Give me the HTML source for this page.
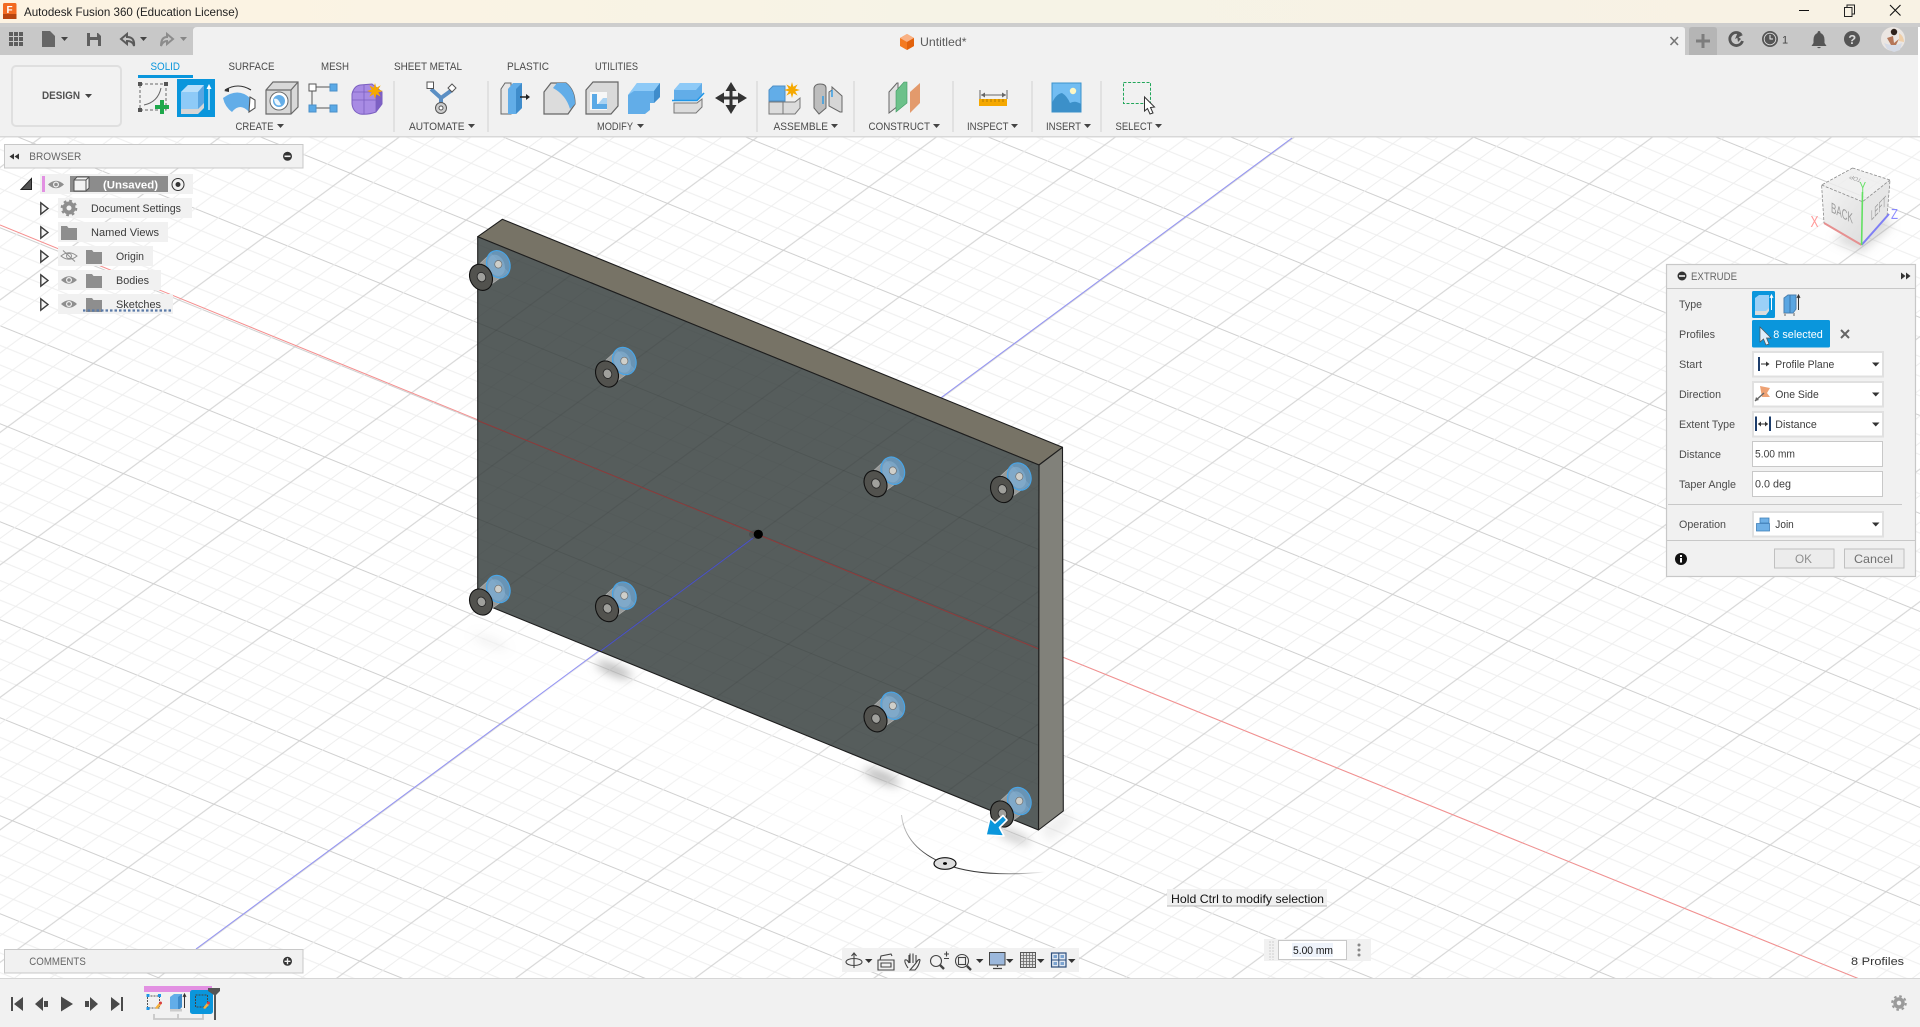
<!DOCTYPE html>
<html><head><meta charset="utf-8"><title>Autodesk Fusion 360</title>
<style>
html,body{margin:0;padding:0;background:#fff;width:1920px;height:1027px;overflow:hidden}
svg{display:block;position:absolute;left:0;top:0}
text{font-family:"Liberation Sans",sans-serif;font-size:11px;fill:#4a4a4a}
.l{font-size:11px;fill:#4c4c4c}
.v{font-size:11px;fill:#3c3c3c}
</style></head><body>
<svg width="1920" height="1027" viewBox="0 0 1920 1027" xmlns="http://www.w3.org/2000/svg">
<defs>
<pattern id="gr" patternUnits="userSpaceOnUse" width="400" height="90.86" patternTransform="translate(758,534) rotate(22) translate(0,-45.43)">
<path d="M0 9.09H400M0 27.26H400M0 63.6H400M0 81.77H400" stroke="#eeeeee" stroke-width="1" fill="none"/>
<path d="M0 45.43H400" stroke="#d0d0d0" stroke-width="1" fill="none"/>
</pattern>
<pattern id="gb" patternUnits="userSpaceOnUse" width="400" height="106.5" patternTransform="translate(758,534) rotate(-36.5) translate(0,-53.25)">
<path d="M0 10.65H400M0 31.95H400M0 74.55H400M0 95.85H400" stroke="#eeeeee" stroke-width="1" fill="none"/>
<path d="M0 53.25H400" stroke="#d0d0d0" stroke-width="1" fill="none"/>
</pattern>
<pattern id="dr" patternUnits="userSpaceOnUse" width="400" height="90.86" patternTransform="translate(758,534) rotate(22) translate(0,-45.43)">
<path d="M0 9.09H400M0 27.26H400M0 63.6H400M0 81.77H400" stroke="#000" stroke-opacity=".03" fill="none"/>
<path d="M0 45.43H400" stroke="#000" stroke-opacity=".09" fill="none"/>
</pattern>
<pattern id="db" patternUnits="userSpaceOnUse" width="400" height="106.5" patternTransform="translate(758,534) rotate(-36.5) translate(0,-53.25)">
<path d="M0 10.65H400M0 31.95H400M0 74.55H400M0 95.85H400" stroke="#000" stroke-opacity=".03" fill="none"/>
<path d="M0 53.25H400" stroke="#000" stroke-opacity=".09" fill="none"/>
</pattern>
<linearGradient id="tb" x1="0" x2="1" y1="0" y2="0"><stop offset="0" stop-color="#fdf3e2"/><stop offset=".5" stop-color="#f6f3e6"/><stop offset="1" stop-color="#f8f2e4"/></linearGradient>
<linearGradient id="cubeL" x1="0" x2="1" y1="0" y2="1"><stop offset="0" stop-color="#f4f4f4"/><stop offset="1" stop-color="#dedede"/></linearGradient>
<linearGradient id="arc" gradientUnits="userSpaceOnUse" x1="900" y1="0" x2="1045" y2="0"><stop offset="0" stop-color="#222" stop-opacity=".2"/><stop offset=".2" stop-color="#222" stop-opacity=".9"/><stop offset=".6" stop-color="#222" stop-opacity=".9"/><stop offset="1" stop-color="#222" stop-opacity="0"/></linearGradient>
<filter id="b6" x="-50%" y="-50%" width="200%" height="200%"><feGaussianBlur stdDeviation="5"/></filter>
<filter id="b10" x="-30%" y="-30%" width="160%" height="160%"><feGaussianBlur stdDeviation="12"/></filter>
<g id="bolt">
<path d="M-2.500 -12.500 L10 -24 L27 -5 L11 6.500 Z" fill="#c2c2c0" fill-opacity=".62" stroke="#b5b5b5" stroke-width=".6"/>
<ellipse cx="17.300" cy="-13" rx="11.500" ry="14" transform="rotate(-22 17.300 -13)" fill="#6c9dc4" fill-opacity=".85" stroke="#46a6ea" stroke-width="1.100"/>
<ellipse cx="15.500" cy="-12" rx="8" ry="11" transform="rotate(-22 15.500 -12)" fill="#8ab3d2" fill-opacity=".55"/>
<ellipse cx="17.300" cy="-13" rx="3.600" ry="3.800" fill="#cfcfca" stroke="#6e6e6e" stroke-width=".7"/>
<ellipse cx="0" cy="0" rx="11" ry="13.500" transform="rotate(-25)" fill="#52524e" stroke="#111" stroke-width="1.100"/>
<ellipse cx="0.500" cy="0" rx="4.200" ry="4.800" transform="rotate(-25)" fill="#a0a09c" stroke="#2a2a2a" stroke-width=".9"/>
</g>
<path id="car" d="M0 0h7l-3.500 4z" fill="#444"/>
<g id="eye"><path d="M-8 0Q0 -7.500 8 0Q0 7.500 -8 0Z" fill="#8f8f8f"/><circle r="3" fill="#f1f1f1"/><circle r="1.800" fill="#8f8f8f"/></g>
<path id="fold" d="M0 2h6l1.500 2H16v12H0z" fill="#8e8e8e"/>
<path id="tri" d="M0.800 0.800L8 6.500L0.800 12.200Z" fill="#f5f5f5" stroke="#3c3c3c" stroke-width="1.400"/>
<path id="cat" d="M0 0h7.500l-3.750 4z" fill="#333"/>
<polygon id="star" points="8,0 3.230,1.340 5.660,5.660 1.340,3.230 0,8 -1.340,3.230 -5.660,5.660 -3.230,1.340 -8,0 -3.230,-1.340 -5.660,-5.660 -1.340,-3.230 0,-8 1.340,-3.230 5.660,-5.660 3.230,-1.340" fill="#f5a800"/>
</defs>

<!-- viewport -->
<rect x="0" y="137" width="1920" height="842" fill="#fff"/>
<rect x="0" y="137" width="1920" height="842" fill="url(#gr)"/>
<rect x="0" y="137" width="1920" height="842" fill="url(#gb)"/>

<!-- ground haze + shadows -->
<path d="M470 620L1040 850L1000 915L450 670Z" fill="#fff" fill-opacity=".6" filter="url(#b10)"/>
<path d="M0 225L758 534L1920 1003.500" stroke="#f58f8f" stroke-width="1" fill="none"/>
<path d="M1292 138L196 949" stroke="#9292f5" stroke-width="1" fill="none"/>
<g filter="url(#b6)" fill="#9a9a9a">
<ellipse cx="614" cy="670" rx="19" ry="5" transform="rotate(22 614 670)" fill-opacity=".75"/>
<ellipse cx="882" cy="777" rx="19" ry="5" transform="rotate(22 882 777)" fill-opacity=".75"/>
<ellipse cx="1013" cy="836" rx="19" ry="5" transform="rotate(22 1013 836)" fill-opacity=".5"/>
<ellipse cx="490" cy="642" rx="19" ry="5" transform="rotate(22 490 642)" fill-opacity=".12"/>
</g>
<path d="M1039 830L1063 811L1075 820L1050 842Z" fill="#aaa" fill-opacity=".2" filter="url(#b6)"/>

<!-- plate -->
<polygon points="477.700,236.700 502.300,219.300 1062.500,447.300 1039,465" fill="#777366" stroke="#1e1e1e" stroke-width="1.100" stroke-linejoin="round"/>
<polygon points="1039,465 1062.500,447.300 1063.300,811 1038.500,830" fill="#81817a" stroke="#1e1e1e" stroke-width="1.100" stroke-linejoin="round"/>
<polygon points="477.700,236.700 1039,465 1038.500,830 477.700,601.500" fill="#565d5c"/>
<polygon points="477.700,236.700 1039,465 1038.500,830 477.700,601.500" fill="url(#dr)"/>
<polygon points="477.700,236.700 1039,465 1038.500,830 477.700,601.500" fill="url(#db)"/>
<path d="M477.700 420.500L1038.800 649" stroke="#8f3a3a" stroke-width="1" fill="none"/>
<path d="M758 534.300L599.700 651.700" stroke="#4a52c8" stroke-width="1" fill="none"/>
<polygon points="477.700,236.700 1039,465 1038.500,830 477.700,601.500" fill="none" stroke="#1e1e1e" stroke-width="1.100" stroke-linejoin="round"/>
<ellipse cx="756" cy="534.300" rx="7" ry="4.500" fill="#444" fill-opacity=".6"/>
<circle cx="758.300" cy="534.300" r="4.600" fill="#000"/>

<use href="#bolt" x="481" y="277.300"/>
<use href="#bolt" x="607" y="374"/>
<use href="#bolt" x="875.500" y="483.700"/>
<use href="#bolt" x="1002" y="489.500"/>
<use href="#bolt" x="481" y="602"/>
<use href="#bolt" x="607" y="608.600"/>
<use href="#bolt" x="875.500" y="718.800"/>
<use href="#bolt" x="1002" y="814"/>

<!-- manipulator -->
<polygon points="986,835 990,818 995,823 1003,815.500 1007,820 999.500,827.500 1004,836" fill="#0a96dc" stroke="#fff" stroke-width="1.600" stroke-linejoin="round"/>
<path d="M901.500 815Q905 848 945 864Q980 878 1045 872" fill="none" stroke="url(#arc)" stroke-width="1"/>
<ellipse cx="945" cy="863.500" rx="11" ry="5.800" fill="#dedede" stroke="#111" stroke-width="1.200"/>
<ellipse cx="945" cy="863.500" rx="2" ry="1.400" fill="#000"/>

<!-- tooltip -->
<rect x="1167" y="889" width="160" height="17" fill="#f0f0f0"/>
<path d="M1167 906H1327" stroke="#b5b5b5"/>
<text x="1171" y="903" style="font-size:12px;fill:#111" textLength="153" lengthAdjust="spacingAndGlyphs">Hold Ctrl to modify selection</text>

<!-- view cube -->
<path d="M1833 240L1861 253L1892 226L1880 212Z" fill="#999" fill-opacity=".35" filter="url(#b6)"/>
<polygon points="1852.600,168 1821.600,185 1862.500,201.700 1890,180" fill="#ececec" fill-opacity=".8"/>
<polygon points="1821.600,185 1862.500,201.700 1861.600,245 1824,223" fill="url(#cubeL)"/>
<polygon points="1862.500,201.700 1890,180 1887,217 1861.600,245" fill="#e6e6e6"/>
<path d="M1852.600 168L1821.600 185L1824 223M1852.600 168L1890 180L1887 217M1821.600 185L1862.500 201.700L1890 180" fill="none" stroke="#8a8a8a" stroke-width=".8" stroke-dasharray="3 1.500"/>
<path d="M1824 223L1861.600 245" stroke="#e69090" stroke-width="2"/>
<path d="M1861.600 245L1889 214" stroke="#7f7ff5" stroke-width="2"/>
<path d="M1861.600 245L1862.500 192" stroke="#62e062" stroke-width="1.600"/>
<text transform="matrix(.62 .33 0 1.100 1831 212)" style="font-size:13px;fill:#999">BACK</text>
<text transform="matrix(.47 -.5 0 1.100 1871 221)" style="font-size:13px;fill:#999">LEFT</text>
<text transform="matrix(-.55 -.2 .3 -.5 1862 179)" style="font-size:10px;fill:#999">TOP</text>
<text x="1810.500" y="227" style="font-size:16px;fill:#ff9a9a" textLength="8" lengthAdjust="spacingAndGlyphs">X</text>
<text x="1891" y="219" style="font-size:15px;fill:#8a8aff" textLength="7" lengthAdjust="spacingAndGlyphs">Z</text>
<text x="1859.500" y="192" style="font-size:15px;fill:#62e062" textLength="6.500" lengthAdjust="spacingAndGlyphs">Y</text>

<!-- title bar -->
<rect x="0" y="0" width="1920" height="23" fill="url(#tb)"/>
<rect x="0" y="23" width="1920" height="4" fill="#cdcdcd"/>
<rect x="3" y="3" width="13.500" height="16" rx="1.500" fill="#f26a21"/>
<path d="M3 14h13.500v5H3z" fill="#b8440f"/>
<text x="6.500" y="13" style="font-size:10px;font-weight:bold;fill:#fff">F</text>
<text x="24" y="16" style="font-size:12px;fill:#222" textLength="214.500" lengthAdjust="spacingAndGlyphs">Autodesk Fusion 360 (Education License)</text>
<path d="M1799 10.500H1809" stroke="#111" stroke-width="1"/>
<path d="M1844.500 7.500h7.500v9h-7.500zM1847 7.500V5h7.500v9H1852" fill="none" stroke="#222" stroke-width="1"/>
<path d="M1890 5L1900.500 15.500M1900.500 5L1890 15.500" stroke="#111" stroke-width="1.100"/>

<!-- tab row -->
<rect x="0" y="27" width="1918" height="28" fill="#c8c8c8"/>
<path d="M193 55V31Q193 27 197 27H1682Q1685 27 1685 30V55Z" fill="#f1f1f1"/>
<path d="M1689 55V30Q1689 27 1692 27H1714Q1717 27 1717 30V55Z" fill="#b5b5b5"/>
<path d="M1703 34v14M1696 41h14" stroke="#7d7d7d" stroke-width="3"/>
<path d="M1670.500 37L1678 45M1678 37L1670.500 45" stroke="#777" stroke-width="1.600"/>
<!-- left quick icons -->
<path d="M9 32h4v4H9zM14 32h4v4h-4zM19 32h4v4h-4zM9 37h4v4H9zM14 37h4v4h-4zM19 37h4v4h-4zM9 42h4v4H9zM14 42h4v4h-4zM19 42h4v4h-4z" fill="#5d5d5d"/>
<path d="M42 31h8l5 5v11H42z" fill="#666"/><use href="#car" x="61" y="37"/>
<path d="M87 33h11l3 3v10H87z" fill="#5f5f5f"/><rect x="90" y="33" width="7" height="4" fill="#c8c8c8"/><rect x="90" y="40" width="8" height="6" fill="#c8c8c8"/>
<path d="M121 39l6-5v3q8 0 7 9q-1-5-7-5v3z" fill="none" stroke="#5a5a5a" stroke-width="2"/><use href="#car" x="140" y="37"/>
<path d="M173 39l-6-5v3q-6 0-6 9q2-5 6-5v3z" fill="none" stroke="#8c8c8c" stroke-width="2"/><use href="#car" x="180" y="37" opacity=".5"/>
<!-- right icons -->
<path d="M1741 34.500A6.500 6.500 0 1 0 1742.500 41" fill="none" stroke="#555" stroke-width="2.800"/><path d="M1735 39l3-7 5 3z" fill="#555"/><path d="M1737 36l4 3-3 3z" fill="#555"/>
<circle cx="1770" cy="39" r="7.500" fill="#555" stroke="#555"/><circle cx="1770" cy="39" r="5.800" fill="none" stroke="#ddd" stroke-width=".9"/><path d="M1770 35v4h3" stroke="#eee" fill="none"/>
<text x="1782" y="43.500" style="font-size:11px;fill:#444">1</text>
<path d="M1819 31q1.500 0 1.500 2q4 1.500 4 7v3l2 3h-15l2-3v-3q0-5.500 4-7q0-2 1.500-2zM1817 47h4q-2 2.500-4 0z" fill="#555"/>
<circle cx="1852" cy="39" r="8" fill="#555"/><text x="1848.300" y="44" style="font-size:13px;font-weight:bold;fill:#d8d8d8">?</text>
<circle cx="1893" cy="39" r="12" fill="#ebe6e2"/><path d="M1884 43q9 4 18 0l-2 7-6 2-7-3z" fill="#d6dbe6"/><path d="M1899 33a11 11 0 0 1 5 9l-5-1z" fill="#f0cfa8"/><circle cx="1894" cy="32" r="3.200" fill="#2e221c"/><path d="M1887 38l6-2 1 7 5-4-3 6-5 0z" fill="#b5775a"/>

<!-- toolbar -->
<rect x="0" y="55" width="1918" height="81" fill="#f1f1f1"/>
<rect x="193" y="50" width="1492" height="6" fill="#f1f1f1"/>
<rect x="0" y="136" width="1920" height="1.500" fill="#d8d8d8"/>
<rect x="12" y="66" width="109" height="60" rx="4" fill="#f2f2f2" stroke="#dfdfdf" stroke-width="2"/>
<text x="42" y="99" style="font-size:11px;font-weight:bold;fill:#505050" textLength="38" lengthAdjust="spacingAndGlyphs">DESIGN</text><use href="#car" x="85" y="94" />

<text x="150.500" y="70" style="fill:#0a96dc" textLength="29.500" lengthAdjust="spacingAndGlyphs">SOLID</text>
<text x="228.500" y="70" textLength="46" lengthAdjust="spacingAndGlyphs">SURFACE</text>
<text x="321" y="70" textLength="28" lengthAdjust="spacingAndGlyphs">MESH</text>
<text x="394" y="70" textLength="68" lengthAdjust="spacingAndGlyphs">SHEET METAL</text>
<text x="507" y="70" textLength="42" lengthAdjust="spacingAndGlyphs">PLASTIC</text>
<text x="595" y="70" textLength="43" lengthAdjust="spacingAndGlyphs">UTILITIES</text>
<rect x="138" y="75" width="55" height="3" fill="#0a96dc"/>

<g stroke="#dcdcdc" stroke-width="1.500"><path d="M394 81V132M488 81V132M757 81V132M854 81V132M953 81V132M1032 81V132M1101 81V132"/></g>

<!-- toolbar labels -->
<text x="235.500" y="130" textLength="38" lengthAdjust="spacingAndGlyphs">CREATE</text><use href="#car" x="277" y="124"/>
<text x="409" y="130" textLength="55.500" lengthAdjust="spacingAndGlyphs">AUTOMATE</text><use href="#car" x="468" y="124"/>
<text x="597" y="130" textLength="36" lengthAdjust="spacingAndGlyphs">MODIFY</text><use href="#car" x="637" y="124"/>
<text x="773.500" y="130" textLength="54.500" lengthAdjust="spacingAndGlyphs">ASSEMBLE</text><use href="#car" x="831" y="124"/>
<text x="868.500" y="130" textLength="61.500" lengthAdjust="spacingAndGlyphs">CONSTRUCT</text><use href="#car" x="933" y="124"/>
<text x="967" y="130" textLength="41.500" lengthAdjust="spacingAndGlyphs">INSPECT</text><use href="#car" x="1011" y="124"/>
<text x="1046" y="130" textLength="35" lengthAdjust="spacingAndGlyphs">INSERT</text><use href="#car" x="1084" y="124"/>
<text x="1115.500" y="130" textLength="37" lengthAdjust="spacingAndGlyphs">SELECT</text><use href="#car" x="1155" y="124"/>

<!-- create sketch -->
<rect x="140" y="84" width="26" height="26" fill="none" stroke="#666" stroke-dasharray="3 2"/>
<path d="M144 105Q158 102 161 88" fill="none" stroke="#666"/>
<g fill="#555"><rect x="138" y="82" width="4" height="4"/><rect x="164" y="82" width="4" height="4"/><rect x="138" y="108" width="4" height="4"/></g>
<path d="M162 100v14M155 107h14" stroke="#1ea84b" stroke-width="4"/>
<!-- extrude -->
<rect x="177" y="79" width="38" height="38" fill="#0a96dc"/>
<polygon points="181,92 188,85 204,85 204,105 198,112 181,112" fill="#8ecaf7"/>
<polygon points="181,92 188,85 204,85 198,92" fill="#b8dffa"/>
<polygon points="198,92 204,85 204,105 198,112" fill="#59a6e2"/>
<polygon points="181,109 198,109 204,103 204,108 198,114 181,114" fill="#d6d6d6"/>
<path d="M209 110V86" stroke="#fff" stroke-width="1.200"/><path d="M206.500 89l2.500-5 2.500 5z" fill="#fff"/>
<!-- revolve -->
<path d="M225 90Q238 82 251 90" fill="none" stroke="#333" stroke-width="1.100"/><path d="M224 91l5-3 0 4z" fill="#333"/>
<path d="M223 98Q238 87 250 98L249 112Q240 102 232 112Q225 107 223 98Z" fill="#62ade8"/>
<path d="M250 97L255 100L255 108L249 112Z" fill="#fff" stroke="#555" stroke-width="1.100"/>
<!-- hole -->
<polygon points="266,90 273,82 298,82 298,107 291,114 266,114" fill="#d8d8d8" stroke="#6a6a6a" stroke-width="1.200"/>
<path d="M266 90h25v24M291 90l7-8" fill="none" stroke="#6a6a6a" stroke-width="1.200"/>
<circle cx="279" cy="101" r="9" fill="#fff" stroke="#6a6a6a"/><circle cx="279" cy="101" r="6" fill="#65aee8"/><path d="M274 99q4 -2 7 6q-6 2-7-6z" fill="#eef6fc"/>
<!-- box form -->
<path d="M316 87H331M312 91V105M315 108H331" stroke="#555"/>
<rect x="309" y="84" width="7" height="7" fill="#fff" stroke="#555"/>
<rect x="330" y="84" width="7" height="7" fill="#5aa9e6" stroke="#4a90c8"/>
<rect x="309" y="105" width="7" height="7" fill="#5aa9e6" stroke="#4a90c8"/>
<rect x="330" y="105" width="7" height="7" fill="#5aa9e6" stroke="#4a90c8"/>
<!-- form -->
<path d="M352 94Q354 86 360 85L372 84L382 92V104L376 112Q368 115 360 114Q353 112 352 104Z" fill="#a88be4" stroke="#7b5fc0"/>
<path d="M376 92L382 92V104L376 112Z" fill="#7d60c4"/>
<path d="M352 100H376M364 85V114M352 92H376M376 92V112" stroke="#7b5fc0" fill="none" stroke-width=".8"/>
<use href="#star" x="375" y="91"/>
<!-- automate -->
<path d="M431 89L441 98V107M452 90L441 98" stroke="#5b8fc4" stroke-width="4" fill="none"/>
<rect x="427" y="82" width="6.500" height="6.500" fill="#fff" stroke="#555"/>
<path d="M452 84l4 4-4 4-4-4z" fill="#fff" stroke="#555"/>
<circle cx="441" cy="108" r="5.500" fill="#ccc" stroke="#555"/><circle cx="441" cy="108" r="2" fill="#fff" stroke="#555"/>
<!-- press pull -->
<polygon points="501,89 505,83 511,83 511,114 501,114" fill="#e6e6e6" stroke="#666"/>
<polygon points="508,114 508,89 513,83 522,83 522,108 516,114" fill="#62ade8"/>
<polygon points="516,89 522,83 522,108 516,114" fill="#3f8ccb"/>
<path d="M520 97H528" stroke="#222" stroke-width="1.500"/><path d="M526 94l4 3-4 3z" fill="#222"/>
<!-- fillet -->
<path d="M544 92L551 83H566Q575 90 575 104L568 114H544Z" fill="#dcdcdc" stroke="#666" stroke-width="1.200"/>
<path d="M557 83H566Q575 90 575 104L570 109Q566 95 553 88Z" fill="#62ade8"/>
<!-- shell -->
<polygon points="586,90 593,82 618,82 618,106 611,114 586,114" fill="#d9d9d9" stroke="#666" stroke-width="1.200"/>
<rect x="590" y="92" width="17" height="18" fill="#f7f7f7"/>
<path d="M592 94h5v10h10v5h-15z" fill="#5aa9e6"/><path d="M598 104l5-6h4v6z" fill="#a9d2f2"/>
<!-- combine -->
<path d="M628 95V114H645L650 110V103H654L660 97V83H637Z" fill="#62ade8"/><polygon points="628,95 637,83 660,83 654,91 634,91" fill="#8ecaf7"/>
<polygon points="654,91 660,83 660,97 654,103" fill="#3f8ccb"/>
<!-- offset -->
<polygon points="674,90 680,83 702,83 702,94 696,101 674,101" fill="#62ade8"/>
<polygon points="674,90 680,83 702,83 696,90" fill="#8ecaf7"/>
<path d="M672 100.500H697L704 93" stroke="#1e96e8" stroke-width="1.600" fill="none"/>
<polygon points="674,103 697,103 702,99 702,107 696,113 674,113" fill="#dcdcdc" stroke="#777"/>
<!-- move -->
<path d="M731 88V108M721 98H741" stroke="#333" stroke-width="3"/>
<path d="M731 82l5.500 9h-11zM731 114l5.500-9h-11zM715 98l9-5.500v11zM747 98l-9-5.500v11z" fill="#333"/>
<!-- assemble -->
<polygon points="769,90 773,86 785,86 785,101 769,101" fill="#62ade8" stroke="#4d8fc6"/>
<rect x="769" y="102" width="14" height="12" fill="#dcdcdc" stroke="#777"/>
<polygon points="783,102 795,102 800,98 800,108 795,114 783,114" fill="#dcdcdc" stroke="#777"/>
<use href="#star" x="792" y="90"/>
<!-- joint -->
<path d="M814 88Q815 84 820 84Q826 84 826 88V108L819 114L814 108Z" fill="#bdbdbd" stroke="#666"/>
<polygon points="829,92 832,90 832,87 842,96 842,112 840,112 829,106" fill="#d6d6d6" stroke="#666"/>
<path d="M823 96V104M832 90V97" stroke="#1e96e8" stroke-width="1.300"/>
<!-- construct -->
<polygon points="889,92 897,83 898,83 898,106 889,113" fill="#e0e0e0" stroke="#666"/>
<polygon points="896,91 904,82 907,82 907,103 896,112" fill="#6cc18a" stroke="#3f9a62" stroke-width=".6"/>
<polygon points="910,92 920,83 920,103 910,113" fill="#e39a6c"/>
<!-- inspect -->
<path d="M980 90V99M1007 90V99" stroke="#666"/><path d="M981 95H1006" stroke="#666"/><path d="M981 95l4-2.500v5zM1006 95l-4-2.500v5z" fill="#666"/>
<rect x="979" y="99" width="28" height="7" fill="#f5a800"/><path d="M983 99v3M987 99v3M991 99v3M995 99v3M999 99v3M1003 99v3" stroke="#9a6a00" stroke-width=".7"/>
<!-- insert -->
<rect x="1052" y="83" width="29" height="29" fill="#72bdf2" stroke="#3c92cc"/>
<circle cx="1073" cy="91" r="3.200" fill="#fdf7c4"/>
<path d="M1052 112V103Q1056 94 1062 93Q1067 96 1070 103Q1075 100 1081 104V112Z" fill="#3c90c9"/>
<!-- select -->
<rect x="1123.500" y="82.500" width="27" height="21" fill="none" stroke="#21a65a" stroke-dasharray="3 1.600"/>
<path d="M1144.500 97V111L1147.500 108.500L1150 114L1153 113L1150.500 107.500L1154.500 107Z" fill="#fff" stroke="#333"/>

<!-- untitled -->
<polygon points="907,34 914,38 914,46 907,50 900,46 900,38" fill="#f47a20"/><polygon points="907,34 914,38 907,42 900,38" fill="#f9b184"/><polygon points="907,42 914,38 914,46 907,50" fill="#e2620c"/>
<text x="920" y="46" style="font-size:12px;fill:#5a5a5a" textLength="46.500" lengthAdjust="spacingAndGlyphs">Untitled*</text>

<!-- browser panel -->
<rect x="4.500" y="144.500" width="298.500" height="23.500" fill="#f1f1f1" stroke="#c8c8c8"/>
<path d="M14 153.500v6l-4.500-3zM19 153.500v6l-4.500-3z" fill="#333"/>
<text x="29.300" y="160" style="fill:#666" textLength="52" lengthAdjust="spacingAndGlyphs">BROWSER</text>
<circle cx="287.500" cy="156.300" r="4.500" fill="#333"/><rect x="284.500" y="155.500" width="6" height="1.600" fill="#f1f1f1"/>

<rect x="40" y="174" width="153" height="20" fill="#f1f1f1"/>
<path d="M21 189.500L31.500 178.500V189.500Z" fill="#555" stroke="#222" stroke-width="1"/>
<rect x="42" y="176" width="3" height="16" fill="#e290e2"/>
<use href="#eye" x="56" y="184.500"/>
<rect x="70" y="176" width="98" height="16" fill="#8c8c8c"/>
<path d="M74 180l3-3h12v11l-3 3H74z" fill="#f2f2f2" stroke="#555"/><path d="M74 180h12v11M86 180l3-3" fill="none" stroke="#555"/>
<text x="103" y="188.500" style="font-size:11px;font-weight:bold;fill:#fff" textLength="55" lengthAdjust="spacingAndGlyphs">(Unsaved)</text>
<circle cx="178" cy="184.500" r="6" fill="#f1f1f1" stroke="#333"/><circle cx="178" cy="184.500" r="2.500" fill="#333"/>

<rect x="58" y="198" width="134" height="20" fill="#f1f1f1"/>
<use href="#tri" x="40" y="202"/>
<circle cx="69" cy="208" r="4.500" fill="none" stroke="#8e8e8e" stroke-width="4"/><circle cx="69" cy="208" r="7.300" fill="none" stroke="#8e8e8e" stroke-width="2" stroke-dasharray="2.800 2.930"/>
<text x="91" y="212" class="v" textLength="90" lengthAdjust="spacingAndGlyphs">Document Settings</text>

<rect x="58" y="222" width="110" height="20" fill="#f1f1f1"/>
<use href="#tri" x="40" y="226"/><use href="#fold" x="61" y="224"/>
<text x="91" y="236" class="v" textLength="68" lengthAdjust="spacingAndGlyphs">Named Views</text>

<rect x="58" y="246" width="95" height="20" fill="#f1f1f1"/>
<use href="#tri" x="40" y="250"/>
<path d="M61 256Q69 249.500 77 256Q69 262.500 61 256Z" fill="none" stroke="#8f8f8f"/><circle cx="69" cy="256" r="2.500" fill="none" stroke="#8f8f8f"/><path d="M63 250.500L75 261.500" stroke="#8f8f8f"/>
<use href="#fold" x="86" y="248"/>
<text x="116" y="260" class="v" textLength="28" lengthAdjust="spacingAndGlyphs">Origin</text>

<rect x="58" y="270" width="103" height="20" fill="#f1f1f1"/>
<use href="#tri" x="40" y="274"/><use href="#eye" x="69" y="280"/><use href="#fold" x="86" y="272"/>
<text x="116" y="284" class="v" textLength="33" lengthAdjust="spacingAndGlyphs">Bodies</text>

<rect x="58" y="294" width="115" height="20" fill="#f1f1f1"/>
<use href="#tri" x="40" y="298"/><use href="#eye" x="69" y="304"/><use href="#fold" x="86" y="296"/>
<text x="116" y="308" class="v" textLength="45" lengthAdjust="spacingAndGlyphs">Sketches</text>
<path d="M83 310.500H171" stroke="#5a7aa8" stroke-width="2.200" stroke-dasharray="2.500 2"/>

<!-- comments -->
<rect x="4.500" y="949.500" width="298.500" height="23.500" fill="#f1f1f1" stroke="#c8c8c8"/>
<text x="29.300" y="965" style="fill:#666" textLength="56.500" lengthAdjust="spacingAndGlyphs">COMMENTS</text>
<circle cx="287.500" cy="961.300" r="4.500" fill="#333"/><path d="M284.500 961.300h6M287.500 958.300v6" stroke="#f1f1f1" stroke-width="1.400"/>

<!-- nav bar -->
<rect x="842" y="948" width="237" height="24" fill="#f1f1f1"/>
<g fill="none" stroke="#444" stroke-width="1.100">
<path d="M854 953V968M851.500 956L854 953L856.500 956"/><ellipse cx="854" cy="962" rx="8" ry="3.500"/>
<path d="M878 960h16v10h-16zM881 963h10v4h-10zM880 960l1-4 10-2 1 2" />
<path d="M908 968Q904 962 905 960Q907 959 909 963V955M910 963V953.500M913 963V953.500M916 963V955M916 963Q919 958 920 960Q919 966 915 970H910Z"/>
<circle cx="936" cy="961" r="5.500"/><path d="M940 965l4 4" stroke-width="2.400"/><path d="M944 954h5M946.500 951.500v5M944 958.500h5"/>
<circle cx="962" cy="961" r="6.500"/><rect x="958.500" y="957.500" width="7" height="7"/><path d="M967 966l4 4" stroke-width="2.400"/>
</g>
<use href="#cat" x="976" y="959"/><use href="#cat" x="865" y="959"/>
<rect x="989.500" y="952.500" width="15.500" height="12.500" fill="#9cb8dc" stroke="#444"/><path d="M997.500 965v2M993 968.500h9" stroke="#444" stroke-width="1.200"/>
<use href="#cat" x="1006" y="959"/>
<rect x="1020.500" y="952.500" width="15" height="15" fill="#e0e0e0" stroke="#555"/><path d="M1023.500 953v15M1026.500 953v15M1029.500 953v15M1032.500 953v15M1021 955.500h15M1021 958.500h15M1021 961.500h15M1021 964.500h15" stroke="#666" stroke-width=".8"/>
<use href="#cat" x="1037" y="959"/>
<rect x="1051.500" y="953" width="14.500" height="14" fill="#e0e8f2" stroke="#2c4d7a" stroke-width="1.200"/><path d="M1058.800 953v14M1052 960h14" stroke="#2c4d7a"/>
<path d="M1053.500 955h3.500v3h-3.500zM1060.500 955h3.500v3h-3.500zM1053.500 962h3.500v3h-3.500zM1060.500 962h3.500v3h-3.500z" fill="#7ba3d0"/>
<use href="#cat" x="1068" y="959"/>

<!-- dim input -->
<rect x="1264" y="939" width="107" height="22" fill="#f1f1f1"/>
<path d="M1270 941V960M1273 941V960" stroke="#d0d0d0" stroke-dasharray="2 1"/>
<rect x="1278.500" y="940.500" width="68" height="19" fill="#fff" stroke="#c8c8c8"/>
<rect x="1292" y="943" width="41" height="14" fill="#eef3fb"/>
<text x="1293" y="954" style="font-size:11px;fill:#111" textLength="40" lengthAdjust="spacingAndGlyphs">5.00 mm</text>
<g fill="#888"><circle cx="1359" cy="945" r="1.500"/><circle cx="1359" cy="950" r="1.500"/><circle cx="1359" cy="955" r="1.500"/></g>

<text x="1851" y="965" style="font-size:11px;fill:#333" textLength="53" lengthAdjust="spacingAndGlyphs">8 Profiles</text>

<!-- extrude panel -->
<rect x="1666.500" y="264.500" width="249" height="312" fill="#f1f1f1" stroke="#c8c8c8" stroke-width="1.200"/>
<path d="M1667 288.500H1915M1667 540.500H1915" stroke="#c8c8c8"/>
<path d="M1668 504.500H1902" stroke="#c8c8c8"/>
<circle cx="1682" cy="276" r="4.500" fill="#333"/><rect x="1679" y="275.200" width="6" height="1.600" fill="#f1f1f1"/>
<text x="1691" y="280" style="fill:#666" textLength="46" lengthAdjust="spacingAndGlyphs">EXTRUDE</text>
<path d="M1901 272.500v7l4.500-3.500zM1906 272.500v7l4.500-3.500z" fill="#333"/>

<text x="1679" y="308" class="l" textLength="23" lengthAdjust="spacingAndGlyphs">Type</text>
<text x="1679" y="338" class="l" textLength="36" lengthAdjust="spacingAndGlyphs">Profiles</text>
<text x="1679" y="368" class="l" textLength="23" lengthAdjust="spacingAndGlyphs">Start</text>
<text x="1679" y="398" class="l" textLength="42" lengthAdjust="spacingAndGlyphs">Direction</text>
<text x="1679" y="428" class="l" textLength="56" lengthAdjust="spacingAndGlyphs">Extent Type</text>
<text x="1679" y="458" class="l" textLength="42" lengthAdjust="spacingAndGlyphs">Distance</text>
<text x="1679" y="488" class="l" textLength="57" lengthAdjust="spacingAndGlyphs">Taper Angle</text>
<text x="1679" y="528" class="l" textLength="47" lengthAdjust="spacingAndGlyphs">Operation</text>

<rect x="1752" y="291" width="23" height="27" rx="1.500" fill="#0a96dc"/>
<polygon points="1755,298 1759,295 1769,295 1769,309 1766,313 1755,313" fill="#9ad0f7"/><path d="M1755 311h11l3-3v3l-3 4h-11z" fill="#dcdcdc"/><path d="M1771.500 310V296M1770 298l1.500-3 1.500 3" stroke="#fff" fill="none"/>
<polygon points="1784,298 1788,295 1796,295 1796,309 1793,313 1784,313" fill="#5aa6e2" stroke="#4a80b0"/><path d="M1790 295V313" stroke="#3c78ae"/><path d="M1785 313v3M1794 313v3" stroke="#aaa" stroke-width="2"/><path d="M1798.500 310V296M1797 298l1.500-3 1.500 3" stroke="#333" fill="none"/>

<rect x="1752" y="320" width="78" height="27.500" rx="1.500" fill="#0a96dc"/>
<path d="M1760 327V342L1763.500 339L1766 345L1769 344L1766.500 338L1771 338Z" fill="#dfeefa" stroke="#555" stroke-width=".7"/>
<text x="1773.300" y="338" style="font-size:11px;fill:#fff" textLength="49.500" lengthAdjust="spacingAndGlyphs">8 selected</text>
<path d="M1841 330L1849 338M1849 330L1841 338" stroke="#666" stroke-width="2"/>

<g fill="#fff" stroke="#e0e0e0" stroke-width="2">
<rect x="1753" y="352" width="130" height="24.500"/>
<rect x="1753" y="382" width="130" height="24.500"/>
<rect x="1753" y="412" width="130" height="24.500"/>
<rect x="1753" y="512" width="130" height="24.500"/>
</g>
<g fill="#fff" stroke="#c8c8c8"><rect x="1752.500" y="441.500" width="130" height="25"/><rect x="1752.500" y="471.500" width="130" height="25"/></g>

<path d="M1759 357V371" stroke="#1d3d6b" stroke-width="2"/><path d="M1761 364H1767" stroke="#333"/><path d="M1766 361.500l3.500 2.500-3.500 2.500z" fill="#333"/>
<text x="1775.300" y="368" class="v" textLength="59" lengthAdjust="spacingAndGlyphs">Profile Plane</text>
<path d="M1872 362.500h7.500l-3.750 4z" fill="#333"/>

<path d="M1760 386L1770 388L1767 393L1770 397L1762 397Z" fill="#eea274"/><path d="M1755 401L1764 393" stroke="#666" stroke-width="1.300"/><path d="M1755 401l1-4 3 3z" fill="#666"/>
<text x="1775.300" y="398" class="v" textLength="43.500" lengthAdjust="spacingAndGlyphs">One Side</text>
<path d="M1872 392.500h7.500l-3.750 4z" fill="#333"/>

<path d="M1756 416.500V431M1770 416.500V431" stroke="#1d3d6b" stroke-width="2"/><path d="M1758 424H1768" stroke="#333"/><path d="M1761 421.500l-3 2.500 3 2.500zM1765 421.500l3 2.500-3 2.500z" fill="#333"/>
<text x="1775.300" y="428" class="v" textLength="41.500" lengthAdjust="spacingAndGlyphs">Distance</text>
<path d="M1872 422.500h7.500l-3.750 4z" fill="#333"/>

<text x="1755" y="457.500" class="v" textLength="40" lengthAdjust="spacingAndGlyphs">5.00 mm</text>
<text x="1755" y="487.500" class="v" textLength="36" lengthAdjust="spacingAndGlyphs">0.0 deg</text>

<path d="M1760 518h9v5h-9z" fill="#6fb0e6" stroke="#3f7fb8" stroke-width=".8"/><path d="M1756.500 523.500h13v7.500h-13z" fill="#6fb0e6" stroke="#3f7fb8" stroke-width=".8"/>
<text x="1775.300" y="528" class="v" textLength="18.500" lengthAdjust="spacingAndGlyphs">Join</text>
<path d="M1872 522.500h7.500l-3.750 4z" fill="#333"/>

<circle cx="1681" cy="559" r="6" fill="#111"/><rect x="1680" y="558" width="2" height="4.500" fill="#fff"/><rect x="1680" y="555" width="2" height="2" fill="#fff"/>
<rect x="1774.500" y="549" width="59.500" height="19" fill="#ececec" stroke="#c0c0c0"/>
<text x="1795" y="563" style="fill:#8f8f8f;font-size:12px" textLength="17" lengthAdjust="spacingAndGlyphs">OK</text>
<rect x="1844.500" y="549" width="59.500" height="19" fill="#ececec" stroke="#c0c0c0"/>
<text x="1854" y="563" style="fill:#707070;font-size:12px" textLength="39" lengthAdjust="spacingAndGlyphs">Cancel</text>

<!-- bottom bar -->
<rect x="0" y="978" width="1920" height="49" fill="#f1f1f1"/>
<rect x="0" y="978" width="1920" height="1" fill="#d6d6d6"/>
<g fill="#4a4a4a">
<path d="M11 997h2v14h-2zM23 997v14l-9-7z"/>
<path d="M35 1004l8-7v14zM44 1001h4v6h-4z"/>
<path d="M61 996.500L73 1004L61 1011.500z"/>
<path d="M85 1001h4v6h-4zM90 997l8 7-8 7z"/>
<path d="M111 997l9 7-9 7zM121 997h2v14h-2z"/>
</g>
<rect x="144" y="986" width="68" height="6" fill="#e290e2"/>
<path d="M154 1014v5h49v-5M178 1014v5" fill="none" stroke="#c8c8c8" stroke-width="1.800"/>
<rect x="147.500" y="996" width="12" height="12" fill="none" stroke="#555" stroke-dasharray="2 1"/>
<rect x="146.500" y="994" width="3" height="3" fill="#1e96e8"/><rect x="158" y="994" width="3" height="3" fill="#1e96e8"/><rect x="146.500" y="1007" width="3" height="3" fill="#1e96e8"/>
<path d="M155 1008l4-5 2 2-4 4z" fill="#f5b13d"/><circle cx="160.500" cy="1003" r="1.500" fill="#d94040"/>
<polygon points="170,997 174,994 182,994 182,1007 178,1011 170,1011" fill="#62ade8"/><polygon points="178,997 182,994 182,1007 178,1011" fill="#3f8ccb"/><rect x="170" y="1009" width="12" height="2.500" fill="#ccc"/>
<path d="M184.500 1008V995M183 997l1.500-3 1.500 3" stroke="#333" fill="none"/>
<rect x="190" y="990" width="23" height="24" rx="2.500" fill="#0a96dc"/>
<rect x="195.500" y="995" width="12" height="12" fill="none" stroke="#444" stroke-dasharray="2 1"/>
<path d="M203 1008l4-5 2 2-4 4z" fill="#f5b13d"/><circle cx="208.500" cy="1003" r="1.500" fill="#d94040"/>
<path d="M208 988h12v3l-4 4v25h-2v-25l-6-4z" fill="#555"/>
<circle cx="1899" cy="1003" r="4" fill="none" stroke="#9a9a9a" stroke-width="3.500"/><circle cx="1899" cy="1003" r="6.800" fill="none" stroke="#9a9a9a" stroke-width="2" stroke-dasharray="2.600 2.740"/>
</svg>
</body></html>
